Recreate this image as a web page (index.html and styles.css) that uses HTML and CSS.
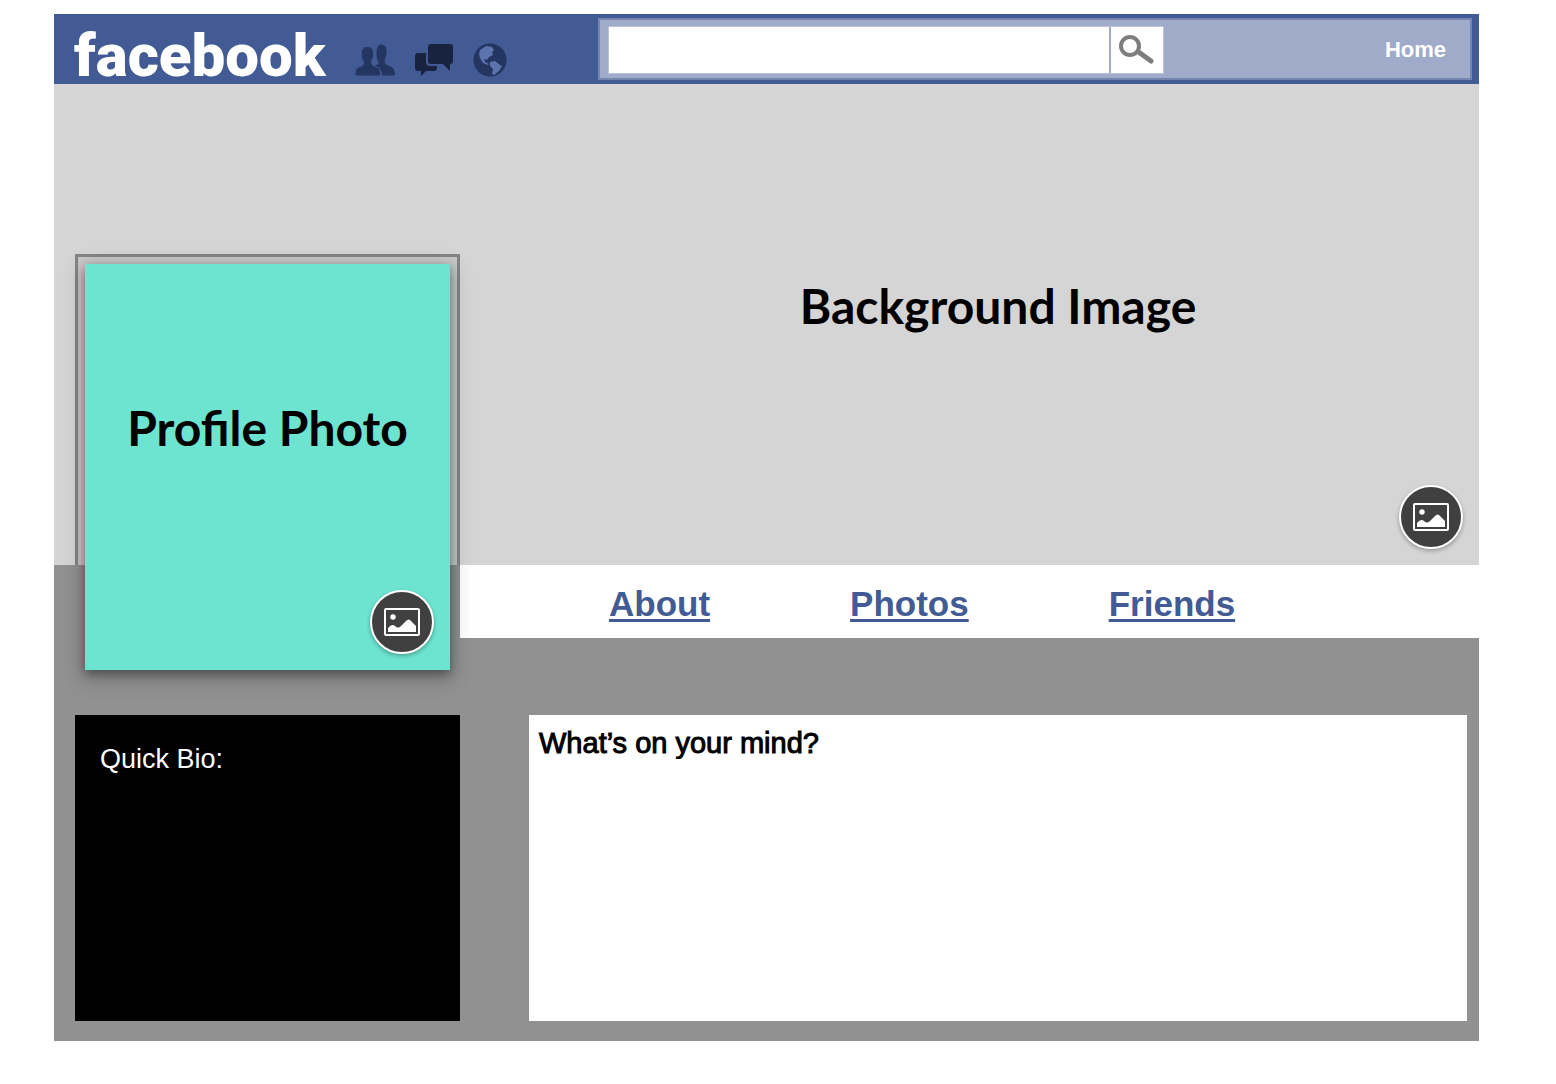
FILE: index.html
```html
<!DOCTYPE html>
<html lang="en">
<head>
  <meta charset="UTF-8">
  <title>facebook</title>
  <meta name="viewport" content="width=device-width, initial-scale=1.0">
  <link rel="stylesheet" href="styles.css">
</head>
<body>
  <div class="page">
    <header class="topbar">
      <a class="logo" href="#">facebook</a>
      <div class="alerts">
        <button class="alert" type="button" aria-label="Friend requests">
          <svg width="42" height="34" viewBox="0 0 42 34" fill="#233560">
            <path d="M26 1.500c5 0 6 4 5.500 9-.3 3-1.500 5-2 7 0 3 1 4 5 5.500 4 1.500 5.500 4 5.500 9.500H27c0-4-1-6-4-8l-3-2c3-1 4-2 3.500-4-2.500-2-3.500-17 2.500-17z"/>
            <path d="M12 3.500c6 0 7 4 6.500 9-.3 3-1.500 4-2 6 0 3 1 4 5 5.500 3.500 1.300 4 4 4 9H0c0-6 1-8 5-9.500 3-1 4-2 3.500-5-3-3-4-15 3.500-15z" stroke="#425b94" stroke-width="1"/>
          </svg>
        </button>
        <button class="alert" type="button" aria-label="Messages">
          <svg width="40" height="34" viewBox="0 0 40 34" fill="#17233f">
            <path d="M3 10h8v9q0 4 4 4h7v2q0 3-3 3h-8l-5 5v-5H3q-3 0-3-3V13q0-3 3-3z"/>
            <path d="M16 1h19q3 0 3 3v14q0 3-3 3v7l-7-7H16q-3 0-3-3V4q0-3 3-3z"/>
          </svg>
        </button>
        <button class="alert" type="button" aria-label="Notifications">
          <svg width="34" height="34" viewBox="0 0 34 34">
            <circle cx="17" cy="17" r="16.500" fill="#233560"/>
            <path d="M7 7l6-4 6 1 2 3-2 2 1 3-4 2-2 3-3-1 1 3 4 2-1 1-5-2-3-5-1-4zM17 19l5-1 5 4 2 1-3 5-5 4-2-1 1-5-3-3z" fill="#5c74ad"/>
          </svg>
        </button>
      </div>
      <div class="tools">
        <form class="search">
          <input class="search-box" type="text" aria-label="Search">
          <button class="search-btn" type="button" aria-label="Go">
            <svg width="38" height="32" viewBox="0 0 38 32" fill="none" stroke="#7d7d7d">
              <circle cx="12" cy="12" r="9" stroke-width="4"/>
              <path d="M18 17l4 2" stroke-width="4"/>
              <path d="M22 19l11 8" stroke-width="5" stroke-linecap="round"/>
            </svg>
          </button>
        </form>
        <a class="home" href="#">Home</a>
      </div>
    </header>

    <section class="cover">
      <div class="frame">
        <div class="photo">
          <h2 class="title">Profile Photo</h2>
          <button class="pick" type="button" aria-label="Change profile photo">
            <svg width="36" height="28" viewBox="0 0 36 28">
              <rect x="1" y="1" width="34" height="26" rx="1" fill="none" stroke="#fff" stroke-width="2"/>
              <circle cx="9" cy="9" r="2.700" fill="#fff"/>
              <path d="M4 24v-4q4-5 7-2 3 3 6 0l5-5q3-3 5 0l5 5v6z" fill="#fff"/>
            </svg>
          </button>
        </div>
      </div>
      <h1 class="title">Background Image</h1>
      <button class="pick" type="button" aria-label="Change background image">
        <svg width="36" height="28" viewBox="0 0 36 28">
          <rect x="1" y="1" width="34" height="26" rx="1" fill="none" stroke="#fff" stroke-width="2"/>
          <circle cx="9" cy="9" r="2.700" fill="#fff"/>
          <path d="M4 24v-4q4-5 7-2 3 3 6 0l5-5q3-3 5 0l5 5v6z" fill="#fff"/>
        </svg>
      </button>
    </section>

    <nav class="tabs">
      <a href="#">About</a>
      <a href="#">Photos</a>
      <a href="#">Friends</a>
    </nav>

    <main class="content">
      <section class="bio">Quick Bio:</section>
      <section class="status">
        <label for="status">What’s on your mind?</label>
        <textarea id="status"></textarea>
      </section>
    </main>
  </div>
</body>
</html>
```
FILE: styles.css
```css
* {
  box-sizing: border-box;
}

body {
  margin: 0;
  padding: 14px 77px 43px 54px;
  background: #fff;
  font-family: "Liberation Sans", Arial, sans-serif;
}

button {
  padding: 0;
  border: none;
  background: none;
  cursor: pointer;
}

svg {
  display: block;
}

.page {
  background: #919191;
}

/* top bar */
.topbar {
  display: flex;
  align-items: center;
  height: 70px;
  padding: 0 7px 0 20px;
  background: #425b94;
}

.logo {
  width: 281px;
  padding-top: 14px;
  color: #fff;
  font-family: Roboto, sans-serif;
  font-size: 60px;
  font-weight: 900;
  line-height: 56px;
  text-decoration: none;
}

.alerts {
  display: flex;
  gap: 18px;
  flex: 1;
  padding-top: 22px;
}

.tools {
  display: flex;
  align-items: center;
  justify-content: space-between;
  width: 874px;
  height: 62px;
  padding: 2px 24px 0 8px;
  border: 2px solid #7485b0;
  background: #a0abc9;
}

.search {
  display: flex;
  height: 48px;
  border: 1px solid #b9c2d8;
}

.search-box {
  width: 502px;
  padding: 0 10px;
  border: none;
  border-right: 2px solid #a0abc9;
  background: #fff;
  font-size: 22px;
}

.search-btn {
  display: flex;
  align-items: center;
  justify-content: center;
  width: 52px;
  background: #fff;
}

.home {
  color: #fff;
  font-size: 22px;
  font-weight: bold;
  text-decoration: none;
}

/* cover, the profile photo hangs out below it */
.cover {
  display: grid;
  grid-template-columns: 385px 1fr;
  grid-template-rows: 311px;
  gap: 69px;
  position: relative;
  padding: 170px 12px 0 21px;
  background: #d5d5d5;
}

.title {
  margin: 0;
  font-family: Lato, sans-serif;
  font-size: 48px;
  font-weight: bold;
  line-height: 60px;
  text-align: center;
}

.cover > .title {
  padding-top: 22px;
}

.frame {
  position: relative;
  z-index: 1;
  padding: 7px 7px 0;
  border: 3px solid #858585;
  border-bottom: none;
  background: #cacaca;
}

.photo {
  position: relative;
  height: 406px;
  padding-top: 134px;
  background: #6ce4d0;
  box-shadow: 0 4px 10px rgba(0, 0, 0, 0.4), 0 6px 20px 4px rgba(0, 0, 0, 0.16);
}

.pick {
  display: flex;
  align-items: center;
  justify-content: center;
  position: absolute;
  right: 16px;
  bottom: 16px;
  width: 64px;
  height: 64px;
  border: 2px solid #fff;
  border-radius: 50%;
  background: #404040;
  box-shadow: 0 2px 4px rgba(0, 0, 0, 0.3);
}

.tabs {
  display: flex;
  align-items: center;
  gap: 140px;
  height: 73px;
  margin-left: 406px;
  padding: 4px 0 0 149px;
  background: #fff;
}

.tabs a {
  color: #425b94;
  font-size: 35px;
  font-weight: bold;
  text-underline-offset: 3px;
  text-decoration-thickness: 3px;
}

/* lower part */
.content {
  display: grid;
  grid-template-columns: 385px 1fr;
  gap: 69px;
  padding: 77px 12px 20px 21px;
}

.bio {
  min-height: 306px;
  padding: 28px 25px;
  background: #000;
  color: #fff;
  font-size: 27px;
  line-height: 32px;
}

.status {
  display: flex;
  flex-direction: column;
  padding: 12px 10px;
  background: #fff;
}

.status label {
  font-size: 29px;
  line-height: 32px;
  -webkit-text-stroke: 1px #000;
}

.status textarea {
  flex: 1;
  padding: 0;
  border: none;
  resize: none;
  font: inherit;
  font-size: 27px;
}
```
